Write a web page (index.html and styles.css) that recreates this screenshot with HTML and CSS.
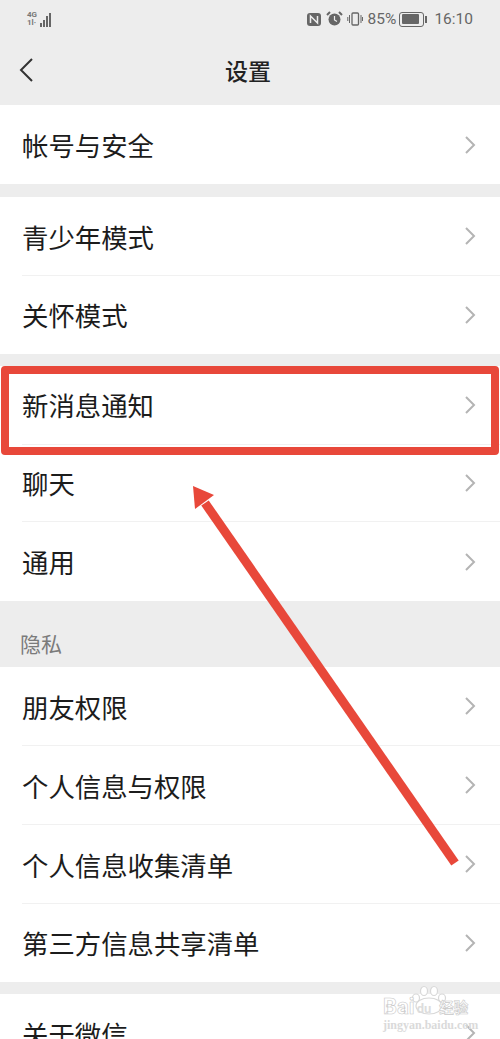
FILE: index.html
```html
<!DOCTYPE html>
<html lang="zh-CN">
<head>
  <meta charset="UTF-8" />
  <meta name="viewport" content="width=device-width, initial-scale=1.0" />
  <title>设置</title>
  <link rel="stylesheet" href="styles.css">
</head>
<body>
  <div class="phone">
    <!-- status bar -->
    <div class="status">
      <div class="signal">
        <div class="net"><span>4G</span><span>1l·</span></div>
        <div class="bars"><i class="b1"></i><i class="b2"></i><i class="b3"></i><i class="b4"></i></div>
      </div>
      <div class="status-right">
        <svg class="ico" width="16" height="15" viewBox="0 0 16 15"><rect x="1" y="1" width="14" height="13" rx="3" fill="#666"/><path d="M4.5 11V4l7 7V4" fill="none" stroke="#eee" stroke-width="1.5"/></svg>
        <svg class="ico" width="17" height="16" viewBox="0 0 17 16"><circle cx="8.500" cy="8.500" r="6" fill="#666"/><path d="M8.500 5v4l2.500 1.500" fill="none" stroke="#eee" stroke-width="1.200"/><path d="M1 4l3-3M16 4l-3-3" stroke="#666" stroke-width="2"/></svg>
        <svg class="ico" width="16" height="14" viewBox="0 0 16 14"><rect x="5" y="1" width="6.500" height="12" rx="1" fill="none" stroke="#666" stroke-width="1.300"/><path d="M2.500 3v8M0.800 5v4M14 3v8M15.500 5v4" stroke="#666"/></svg>
        <span class="pct">85%</span>
        <div class="battery"><div class="fill"></div></div><div class="cap"></div>
        <span class="time">16:10</span>
      </div>
    </div>

    <!-- title bar -->
    <div class="title-bar">
      <svg class="back" width="16" height="26" viewBox="0 0 16 26"><path d="M14 2L3 13l11 11" fill="none" stroke="#333" stroke-width="2"/></svg>
      <h1>设置</h1>
    </div>

    <div class="group">
      <div class="row">帐号与安全<svg class="chev" viewBox="0 0 12 20"><path d="M2 2l8 8-8 8"/></svg></div>
    </div>

    <div class="group gap">
      <div class="row">青少年模式<svg class="chev" viewBox="0 0 12 20"><path d="M2 2l8 8-8 8"/></svg></div>
      <div class="row short">关怀模式<svg class="chev" viewBox="0 0 12 20"><path d="M2 2l8 8-8 8"/></svg></div>
    </div>

    <div class="group gap-s">
      <div class="row">新消息通知<svg class="chev" viewBox="0 0 12 20"><path d="M2 2l8 8-8 8"/></svg></div>
      <div class="row short">聊天<svg class="chev" viewBox="0 0 12 20"><path d="M2 2l8 8-8 8"/></svg></div>
      <div class="row">通用<svg class="chev" viewBox="0 0 12 20"><path d="M2 2l8 8-8 8"/></svg></div>
    </div>

    <div class="section">隐私</div>
    <div class="group">
      <div class="row">朋友权限<svg class="chev" viewBox="0 0 12 20"><path d="M2 2l8 8-8 8"/></svg></div>
      <div class="row">个人信息与权限<svg class="chev" viewBox="0 0 12 20"><path d="M2 2l8 8-8 8"/></svg></div>
      <div class="row">个人信息收集清单<svg class="chev" viewBox="0 0 12 20"><path d="M2 2l8 8-8 8"/></svg></div>
      <div class="row short">第三方信息共享清单<svg class="chev" viewBox="0 0 12 20"><path d="M2 2l8 8-8 8"/></svg></div>
    </div>

    <div class="group gap-s">
      <div class="row">关于微信<svg class="chev" viewBox="0 0 12 20"><path d="M2 2l8 8-8 8"/></svg></div>
    </div>

    <!-- annotation on top of the screenshot -->
    <div class="red-box"></div>
    <svg class="arrow" width="500" height="1039" viewBox="0 0 500 1039">
      <path d="M455 863L205 503" fill="none" stroke="#e8483a" stroke-width="9"/>
      <path d="M193 486L214 495 195 509Z" fill="#e8483a"/>
    </svg>

    <!-- watermark -->
    <div class="mark">
      <svg class="paw" width="36" height="30" viewBox="0 0 36 30">
        <g fill="#fff" stroke="#d8d8d8" stroke-width="1.200">
          <ellipse cx="5" cy="13" rx="3.500" ry="4"/>
          <ellipse cx="13" cy="6" rx="3.500" ry="4.500"/>
          <ellipse cx="23" cy="6" rx="3.500" ry="4.500"/>
          <ellipse cx="31" cy="13" rx="3.500" ry="4"/>
          <ellipse cx="18" cy="21" rx="13" ry="8"/>
        </g>
      </svg>
      <div class="mark-line"><span class="bai">Bai</span><span class="du">du</span><span class="jy">经验</span></div>
      <div class="mark-url">jingyan.baidu.com</div>
    </div>
  </div>
</body>
</html>
```

FILE: styles.css
```css
*{box-sizing:border-box;}
html,body{margin:0;padding:0;}
body{font-family:"Noto Sans CJK SC","Noto Sans",sans-serif;background:#ededed;}
.phone{position:relative;width:500px;height:1039px;overflow:hidden;background:#ededed;color:#1c1c1c;}

/* status bar */
.status{height:38px;padding:9px 27px 0 27px;display:flex;justify-content:space-between;align-items:flex-start;color:#666;}
.signal{display:flex;align-items:flex-end;gap:1px;height:16px;margin-top:2px;}
.net{display:flex;flex-direction:column;font:bold 8px/8px "Roboto",sans-serif;width:12px;color:#777;}
.bars{display:flex;align-items:flex-end;gap:1px;height:15px;}
.bars i{display:block;width:2px;background:#666;}
.b1{height:4px;}.b2{height:7px;}.b3{height:11px;}.b4{height:14px;}
.status-right{display:flex;align-items:center;height:20px;}
.ico{margin-right:4px;}
.pct{font:15.500px/20px "Roboto",sans-serif;margin-left:1px;}
.battery{width:25px;height:15px;margin-left:3px;border:1.500px solid #666;border-radius:3px;padding:1.500px;}
.fill{width:85%;height:100%;background:#666;border-radius:1px;}
.cap{width:2px;height:7px;background:#666;margin-left:1px;}
.time{font:15.500px/20px "Roboto",sans-serif;margin-left:7px;}

/* title bar */
.title-bar{height:67px;position:relative;display:flex;align-items:center;justify-content:center;padding:0 4px 4px 0;}
.title-bar h1{margin:0;font-size:23px;font-weight:500;color:#222;}
.back{position:absolute;left:18px;top:19px;}

/* list */
.group{background:#fff;}
.gap{margin-top:13px;}
.gap-s{margin-top:12px;}
.row{height:79px;margin-left:22px;padding-right:24px;display:flex;align-items:center;justify-content:space-between;font-size:26.400px;letter-spacing:0;border-bottom:1px solid #f1f1f1;}
.row.short{height:77.500px;}
.row:last-child{border-bottom:none;}
.chev{width:12px;height:20px;fill:none;stroke:#b4b4b4;stroke-width:2;}
.section{height:66px;padding:27px 0 0 20px;font-size:21px;line-height:30px;color:#7b7b7b;}

/* annotation */
.red-box{position:absolute;left:1px;top:366px;width:498px;height:89px;border:8px solid #e8483a;border-radius:4px;}
.arrow{position:absolute;left:0;top:0;}

/* watermark */
.mark{position:absolute;left:383px;top:985px;width:92px;color:#fff;}
.paw{position:absolute;left:28px;top:0;}
.mark-line{position:absolute;left:0;top:8px;display:flex;align-items:center;white-space:nowrap;font:bold 22px/24px "Roboto",sans-serif;-webkit-text-stroke:.6px #c8c8c8;}
.du{position:relative;font-size:13px;margin:4px 6px 0 2px;color:#ddd;-webkit-text-stroke:0;}
.jy{font:bold 14.500px/24px "Noto Sans CJK SC",sans-serif;margin-left:2px;}
.mark-url{position:absolute;left:0;top:33px;white-space:nowrap;font:bold 12px/14px "Liberation Serif",serif;color:#dadada;}
```
